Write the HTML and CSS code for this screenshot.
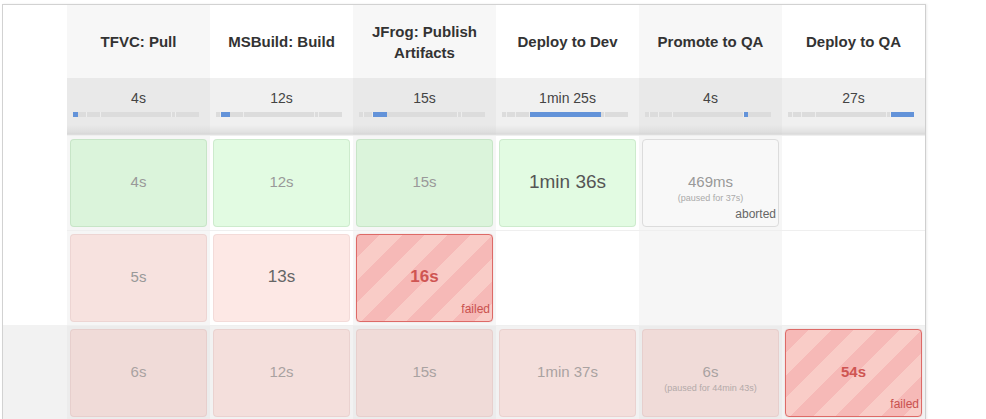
FILE: index.html
```html
<!DOCTYPE html>
<html lang="en">
<head>
<meta charset="utf-8">
<title>Stage View</title>
<link rel="stylesheet" href="styles.css">
</head>
<body>
<div class="stage-view">
  <div class="grid">
    <!-- header row -->
    <div class="label head-label"></div>
    <div class="head odd"><span>TFVC: Pull</span></div>
    <div class="head"><span>MSBuild: Build</span></div>
    <div class="head odd"><span>JFrog: Publish Artifacts</span></div>
    <div class="head"><span>Deploy to Dev</span></div>
    <div class="head odd"><span>Promote to QA</span></div>
    <div class="head"><span>Deploy to QA</span></div>

    <!-- average row -->
    <div class="label avg-label"></div>
    <div class="avg odd">
      <div class="avg-time">4s</div>
      <div class="bar"><i class="seg on" style="width:5px"></i><i class="seg" style="width:9px"></i><i class="seg" style="width:14px"></i><i class="seg" style="width:71px"></i><i class="seg" style="width:4px"></i><i class="seg" style="width:23px"></i></div>
    </div>
    <div class="avg">
      <div class="avg-time">12s</div>
      <div class="bar"><i class="seg" style="width:5px"></i><i class="seg on" style="width:9px"></i><i class="seg" style="width:14px"></i><i class="seg" style="width:71px"></i><i class="seg" style="width:4px"></i><i class="seg" style="width:23px"></i></div>
    </div>
    <div class="avg odd">
      <div class="avg-time">15s</div>
      <div class="bar"><i class="seg" style="width:5px"></i><i class="seg" style="width:9px"></i><i class="seg on" style="width:14px"></i><i class="seg" style="width:71px"></i><i class="seg" style="width:4px"></i><i class="seg" style="width:23px"></i></div>
    </div>
    <div class="avg">
      <div class="avg-time">1min 25s</div>
      <div class="bar"><i class="seg" style="width:5px"></i><i class="seg" style="width:9px"></i><i class="seg" style="width:14px"></i><i class="seg on" style="width:71px"></i><i class="seg" style="width:4px"></i><i class="seg" style="width:23px"></i></div>
    </div>
    <div class="avg odd">
      <div class="avg-time">4s</div>
      <div class="bar"><i class="seg" style="width:5px"></i><i class="seg" style="width:9px"></i><i class="seg" style="width:14px"></i><i class="seg" style="width:71px"></i><i class="seg on" style="width:4px"></i><i class="seg" style="width:23px"></i></div>
    </div>
    <div class="avg">
      <div class="avg-time">27s</div>
      <div class="bar"><i class="seg" style="width:5px"></i><i class="seg" style="width:9px"></i><i class="seg" style="width:14px"></i><i class="seg" style="width:71px"></i><i class="seg" style="width:4px"></i><i class="seg on" style="width:23px"></i></div>
    </div>

    <!-- build row 1 -->
    <div class="label"></div>
    <div class="slot odd"><div class="box success"><span class="dur">4s</span></div></div>
    <div class="slot"><div class="box success"><span class="dur">12s</span></div></div>
    <div class="slot odd"><div class="box success"><span class="dur">15s</span></div></div>
    <div class="slot"><div class="box success"><span class="dur big">1min 36s</span></div></div>
    <div class="slot odd"><div class="box aborted"><span class="dur">469ms</span><span class="paused">(paused for 37s)</span><span class="status">aborted</span></div></div>
    <div class="slot"></div>

    <!-- build row 2 -->
    <div class="label"></div>
    <div class="slot odd"><div class="box pink"><span class="dur">5s</span></div></div>
    <div class="slot"><div class="box pink"><span class="dur mid">13s</span></div></div>
    <div class="slot odd"><div class="box failed"><span class="dur fail mid">16s</span><span class="status fail-label">failed</span></div></div>
    <div class="slot"></div>
    <div class="slot odd"></div>
    <div class="slot"></div>

    <!-- build row 3 (highlighted) -->
    <div class="label hl"></div>
    <div class="slot odd hl"><div class="box pink faded"><span class="dur">6s</span></div></div>
    <div class="slot hl"><div class="box pink faded"><span class="dur">12s</span></div></div>
    <div class="slot odd hl"><div class="box pink faded"><span class="dur">15s</span></div></div>
    <div class="slot hl"><div class="box pink faded"><span class="dur">1min 37s</span></div></div>
    <div class="slot odd hl"><div class="box pink faded"><span class="dur">6s</span><span class="paused">(paused for 44min 43s)</span></div></div>
    <div class="slot hl"><div class="box failed"><span class="dur fail">54s</span><span class="status fail-label">failed</span></div></div>
  </div>
</div>
</body>
</html>
```

FILE: styles.css
```css
html, body {
  margin: 0;
  padding: 0;
  background: #fff;
}

body {
  font-family: "Liberation Sans", Arial, sans-serif;
  color: #333;
}

.stage-view {
  margin: 4px 0 0 2px;
  width: 922px;
  border-top: 1px solid #d2d2d2;
  border-left: 1px solid #d2d2d2;
  border-right: 1px solid #cfcfcf;
  box-shadow: 1px 0 2px rgba(0, 0, 0, 0.08);
}

.grid {
  display: grid;
  grid-template-columns: 64px repeat(6, 143px);
  grid-template-rows: 73px 57px 95px 95px 95px;
}

.label {
  background: #fff;
}

.label.hl {
  background: #f2f2f2;
}

/* header */
.head {
  display: flex;
  align-items: center;
  justify-content: center;
  text-align: center;
  padding: 0 10px;
  background: #fff;
  font-size: 15px;
  font-weight: bold;
  line-height: 21px;
  color: #333;
}

.head.odd {
  background: #f7f7f7;
}

/* averages */
.avg {
  display: flex;
  flex-direction: column;
  align-items: flex-start;
  padding-top: 11px;
  background: linear-gradient(to bottom, #f0f0f0 0, #f0f0f0 47px, #e2e2e2 54px, #dadada 56px, #e6e6e6 57px);
}

.avg.odd {
  background: linear-gradient(to bottom, #e9e9e9 0, #e9e9e9 47px, #dedede 54px, #d7d7d7 56px, #e3e3e3 57px);
}

.avg-time {
  align-self: stretch;
  text-align: center;
  font-size: 14px;
  line-height: 18px;
  color: #444;
}

.bar {
  display: flex;
  margin: 5px 0 0 6px;
  width: 126px;
  height: 5px;
  background: #dadada;
}

.seg {
  display: block;
  height: 5px;
  background: #dcdcdc;
  box-shadow: inset -1px 0 0 #ededed;
}

.seg:last-child {
  box-shadow: none;
}

.seg.on {
  background: #6393d9;
  box-shadow: none;
}

/* build rows */
.slot {
  border-top: 1px solid #efefef;
  padding: 3px;
  background: #fff;
}

.slot.odd {
  background: #f6f6f6;
}

.slot.hl {
  background: #f2f2f2;
}

.slot.odd.hl {
  background: #ececec;
}

.box {
  position: relative;
  height: 88px;
  box-sizing: border-box;
  padding-top: 32px;
  border: 1px solid rgba(0, 0, 0, 0.07);
  border-radius: 4px;
  display: flex;
  flex-direction: column;
  align-items: center;
}

.box.success {
  background: rgba(140, 240, 140, 0.25);
  border-color: rgba(60, 120, 60, 0.12);
}

.box.pink {
  background: rgba(250, 180, 170, 0.3);
  border-color: rgba(120, 60, 60, 0.08);
}

.box.aborted {
  background: #f8f8f8;
  border-color: #dcdcdc;
}

.box.failed {
  border: 1px solid #dd6a67;
  background: repeating-linear-gradient(135deg, #f6b9b7 0, #f6b9b7 16px, #f9ccc7 16px, #f9ccc7 32px);
  box-shadow: 0 0 1px rgba(200, 60, 60, 0.4);
}

.dur {
  font-size: 15px;
  line-height: 20px;
  color: #999;
}

.dur.mid {
  font-size: 17px;
  color: #666;
}

.dur.big {
  font-size: 19px;
  color: #555;
}

.box.faded .dur {
  color: #a9a2a1;
}

.dur.fail {
  font-weight: bold;
  color: #cf5552;
}

.paused {
  font-size: 9px;
  line-height: 12px;
  color: #aaa;
}

.box.faded .paused {
  color: #b3aaa9;
}

.status {
  position: absolute;
  right: 2px;
  bottom: 5px;
  font-size: 12px;
  line-height: 14px;
  color: #666;
}

.status.fail-label {
  color: #c9524f;
}
```
